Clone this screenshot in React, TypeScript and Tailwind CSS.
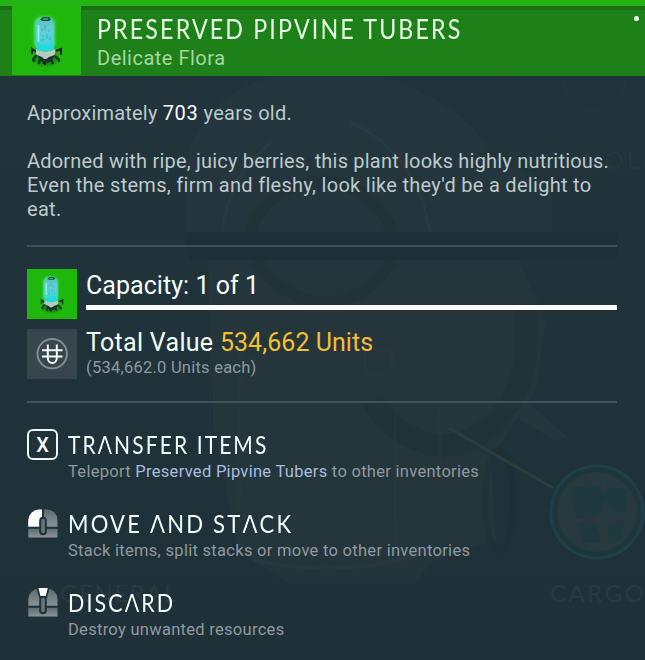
import React from "react";

type MouseButton = "left" | "middle";

function TuberIcon({ className }: { className: string }) {
  return (
    <svg viewBox="0 0 69 69" className={className} aria-hidden="true">
      <defs>
        <linearGradient id="glass" x1="0" y1="0" x2="0" y2="1">
          <stop offset="0" stopColor="#58c3c2" />
          <stop offset="0.4" stopColor="#62cfd6" />
          <stop offset="0.8" stopColor="#43d3da" />
          <stop offset="1" stopColor="#0fe3d4" />
        </linearGradient>
        <filter id="glow" x="-50%" y="-50%" width="200%" height="200%">
          <feGaussianBlur stdDeviation="1.6" />
        </filter>
      </defs>
      <rect x="22.500" y="11" width="20" height="33" rx="7" fill="#5df5c0" opacity="0.85" filter="url(#glow)" />
      <ellipse cx="34" cy="53" rx="12" ry="7" fill="#0c5c12" opacity="0.5" filter="url(#glow)" />
      <path
        d="M25 46l-5-3 0 5M25 49l-4 4 1 3M28 53l-1 5M33 53v6M39 53l2 5M43 50l4 4v2M44 45l5-2 0 6M31 52l1 6"
        fill="none"
        stroke="#0f2923"
        strokeWidth="2"
      />
      <path d="M24 43q9 5 19 0l0 5q-4 5-10 5-5 0-9-5z" fill="#b9c9c2" />
      <path d="M25 49l5 2 3 3 4-3 6-2-3 6-5 2-6-2z" fill="#17352c" />
      <rect x="24" y="13" width="18" height="32" rx="6" fill="url(#glass)" transform="rotate(-2 33 29)" />
      <path d="M25 38q8 4 17 0v5q-8 4-16 1z" fill="#17dfe0" />
      <path d="M26.500 19v17" stroke="#b6f6f7" strokeWidth="1.500" opacity="0.8" />
      <path d="M30 22v3M33 19v5M37 23v3M31 29v2M35 28v4M38 31v3M29 34h3" stroke="#2a9ba5" strokeWidth="1" opacity="0.55" />
      <path d="M28 13.500l3-2.500h6l2 2.500-2 1.500h-7z" fill="#174f43" />
      <path d="M31 13h5" stroke="#7ec8b8" strokeWidth="1" />
    </svg>
  );
}

function UnitsIcon() {
  return (
    <svg viewBox="0 0 50 50" className="h-[50px] w-[50px] shrink-0 bg-[#37454c]" aria-hidden="true">
      <circle cx="25.200" cy="24.700" r="14.700" fill="none" stroke="#848d92" strokeWidth="1.900" />
      <path
        d="M20.800 15.500v13.500a4.500 5 0 0 0 9 0V15.500M15 21.300h20.500M15 27.500h20.500"
        fill="none"
        stroke="#f6fafa"
        strokeWidth="2"
      />
    </svg>
  );
}

function MouseIcon({ active }: { active: MouseButton }) {
  const id = "mouse-" + active;
  return (
    <svg viewBox="0 0 30 29" className="mt-px h-[29px] w-[30px]" aria-hidden="true">
      <defs>
        <linearGradient id={id} x1="0" y1="0" x2="0" y2="1">
          <stop offset="0" stopColor="#5d6a70" />
          <stop offset="1" stopColor="#89949a" />
        </linearGradient>
      </defs>
      <path d="M0.300 18V11A11 11 0 0 1 11 0.500h8A10.500 10.500 0 0 1 29.500 11v7z" fill={`url(#${id})`} />
      <path d="M0.300 19.300h29.200v9.200H0.300z" fill={`url(#${id})`} />
      {active === "left" ? (
        <>
          <path d="M0.300 18V11A11 11 0 0 1 11 0.500h3V18z" fill="#fbffff" />
          <path d="M15 0v10" stroke="#20323a" strokeWidth="2" />
        </>
      ) : (
        <path d="M9.500 0l2.300 9h6.600l2.300-9" fill="#fbffff" stroke="#20323a" strokeWidth="1.800" />
      )}
      <path d="M0 18.700h30" stroke="#20323a" strokeWidth="2" />
      <rect x="12.200" y="8.800" width="5.600" height="16.400" rx="2.800" fill="#67747a" stroke="#20323a" strokeWidth="2" />
    </svg>
  );
}

function KeyIcon() {
  return (
    <span className="flex h-[31px] w-[31px] items-center justify-center rounded-[6px] border-2 border-[#eef8f8] text-[20px] leading-none font-medium text-white">
      X
    </span>
  );
}

// Headings use an "A" without its crossbar, so the inside of the letter is clipped away.
function Title({ text, className }: { text: string; className: string }) {
  return (
    <h2 className={"w-max origin-left font-['Lato'] tracking-[2.500px] whitespace-nowrap " + className}>
      {text.split(/(A)/).map((part, i) =>
        part === "A" ? (
          <span
            key={i}
            className="inline-block [clip-path:polygon(0_0,100%_0,100%_100%,16.900px_100%,8.500px_10.500px,0.100px_100%,0_100%)]"
          >
            A
          </span>
        ) : (
          part
        ),
      )}
    </h2>
  );
}

function Backdrop() {
  return (
    <svg viewBox="0 0 645 660" className="pointer-events-none absolute inset-0 h-full w-full" aria-hidden="true">
      <g fill="#2a3b42" opacity="0.4">
        <path d="M185 232v-65q15-75 100-94h85q95 28 122 82l60 30v47z" />
        <path d="M208 260h310l28 60-10 70-45 70 5 80-65 22-15 22H290l-52-32-25-130z" />
      </g>
      <g fill="none" stroke="#1d2d34" opacity="0.4">
        <path d="M250 232a75 75 0 0 1 142 0M256 260q30 42 70 42t66-42" strokeWidth="12" />
        <path d="M222 232q8-60 50-90M430 232q-14-80-80-110" stroke="#304149" strokeWidth="3" />
        <path d="M372 400q20 38 70 46 70-8 84-90v-50" strokeWidth="22" />
        <ellipse cx="499" cy="500" rx="14" ry="50" strokeWidth="6" />
        <path d="M253 560q85 18 165-5" stroke="#2d3e46" strokeWidth="4" />
      </g>
      <path d="M184 232h433v28H190z" fill="#1e2d35" opacity="0.6" />
      <path d="M513 415l13-14 42 36-13 4z" fill="#25363d" />
      <path d="M449 428l104 60" stroke="#2c3d3e" strokeWidth="3" />
      <circle cx="597" cy="512" r="46" fill="#1f363d" stroke="#1f4046" strokeWidth="3" />
      <circle cx="597" cy="512" r="40" fill="#28393f" />
      <path
        d="M572 488l28-3 5 13-3 12-7 5-3 3-15 1-4-13zM607 486l20 4v20l-13 1-4-9-5-1zM577 524l16-3 6 11 2 11-17 0zM608 525l16-5-2 20-14 3z"
        fill="#1f393f"
      />
      <g fill="none" stroke="#2a3c44" strokeWidth="2">
        <circle cx="594" cy="80" r="31" opacity="0.25" />
        <path d="M210 275v180M240 325v215M365 350h27v24h-27zM395 410v150M440 400v70" opacity="0.3" />
      </g>
      <g fill="#283940" className="font-['Lato'] text-[24px]">
        <text x="508" y="169" textLength="153" opacity="0.8">
          TECHNOLO
        </text>
        <text x="550" y="602" textLength="94">CARGO</text>
        <text x="60" y="602" textLength="116">GENERAL</text>
      </g>
    </svg>
  );
}

interface ActionProps {
  icon: React.ReactNode;
  title: string;
  titleClass: string;
  children: React.ReactNode;
}

function Action({ icon, title, titleClass, children }: ActionProps) {
  return (
    <div className="flex h-[79px] gap-[10px]">
      <div className="flex h-[31px] w-[31px] shrink-0 justify-center">{icon}</div>
      <div>
        <Title text={title} className={"h-[33px] text-[25px] leading-[31px] text-[#f2ffff] " + titleClass} />
        <p className="text-[16.500px] leading-[20px] tracking-[0.290px] whitespace-nowrap text-[#8e9a9f]">{children}</p>
      </div>
    </div>
  );
}

export default function App() {
  return (
    <main className="relative h-[660px] w-[645px] overflow-hidden bg-linear-to-b from-[#21343c] to-[#1f3138] font-['Roboto',sans-serif]">
      <Backdrop />
      <div className="relative">
        <header className="flex h-[76px] border-t-[6px] border-[#24b514] bg-linear-to-b from-[#1a6f12] from-[4px] to-[#1e8019] to-[4px] pl-3">
          <div className="h-[69px] w-[69px] shrink-0 bg-[#20b70d]">
            <TuberIcon className="h-full w-full" />
          </div>
          <div className="grow pt-[7px] pl-4">
            <Title text="PRESERVED PIPVINE TUBERS" className="h-[32px] scale-x-[0.86] text-[27px] leading-[31px] text-[#e6ffe3]" />
            <p className="text-[20px] leading-[26px] tracking-[0.5px] text-[#a5d79f]">Delicate Flora</p>
          </div>
          <span className="mt-[10px] mr-[6px] h-[5px] w-[5px] shrink-0 rounded-full bg-white" />
        </header>

        <div className="pr-7 pl-[27px]">
          <section className="h-[169px] pt-[25px] text-[20px] leading-[24px] tracking-[0.290px] text-[#bdc9cc]">
            <p>
              <span className="tracking-[0.2px]">Approximately </span>
              <span className="tracking-[0.6px] text-white">703</span> years old.
            </p>
            <p className="mt-6 whitespace-nowrap">
              <span className="tracking-[0.2px]">Adorned with ripe, juicy berries, this plant looks highly nutritious.</span>
              <br />
              Even the stems, firm and fleshy, look like they'd be a delight to
              <br />
              eat.
            </p>
          </section>

          <section className="flex h-[158px] flex-col gap-[10px] border-y-2 border-[#42515a] pt-[22px]">
            <div className="flex gap-[9px]">
              <TuberIcon className="h-[50px] w-[50px] shrink-0 bg-[#20b70d]" />
              <div className="flex grow flex-col">
                <p className="h-[36px] text-[25px] leading-[33px] tracking-[0.050px] text-[#f5ffff]">Capacity: 1 of 1</p>
                <div className="h-[5px] w-full bg-white" />
              </div>
            </div>
            <div className="flex gap-[9px]">
              <UnitsIcon />
              <div>
                <p className="text-[25px] leading-[28px] tracking-[0.3px] text-[#f5ffff]">
                  Total Value <span className="tracking-[0.050px] text-[#f3bf34]">534,662 Units</span>
                </p>
                <p className="text-[16.500px] leading-[21px] tracking-[0.240px] text-[#8e9a9f]">(534,662.0 Units each)</p>
              </div>
            </div>
          </section>

          <section className="pt-[26px]">
            <Action icon={<KeyIcon />} title="TRANSFER ITEMS" titleClass="scale-x-[0.84]">
              Teleport <span className="text-[#a9bddd]">Preserved Pipvine Tubers</span> to other inventories
            </Action>
            <Action icon={<MouseIcon active="left" />} title="MOVE AND STACK" titleClass="scale-x-[0.882]">
              Stack items, split stacks or move to other inventories
            </Action>
            <Action icon={<MouseIcon active="middle" />} title="DISCARD" titleClass="scale-x-[0.855]">
              Destroy unwanted resources
            </Action>
          </section>
        </div>
      </div>
    </main>
  );
}
